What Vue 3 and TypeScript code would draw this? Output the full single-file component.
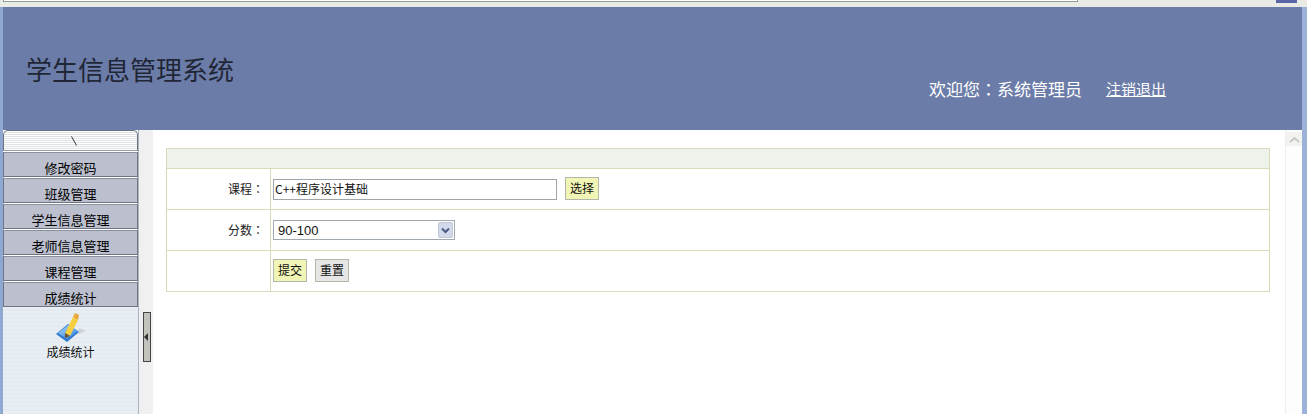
<script setup lang="ts">
import { ref } from 'vue'

const menus = ['修改密码', '班级管理', '学生信息管理', '老师信息管理', '课程管理', '成绩统计']

const course = ref('C++程序设计基础')
const score = ref('90-100')
</script>

<template>
  <div class="page">
    <div class="topbar">
      <div class="address"></div>
      <div class="go"></div>
    </div>
    <div class="frame">
      <header class="banner">
        <h1 class="title">学生信息管理系统</h1>
        <div class="welcome">欢迎您<span class="colon">：</span>系统管理员</div>
        <a class="logout">注销退出</a>
      </header>
      <div class="content">
        <aside class="side">
          <div class="side-head">
            <svg class="head-mark" width="10" height="12" viewBox="0 0 10 12"><path d="M2.500 1.500 L7.500 10.500" stroke="#333" stroke-width="1" fill="none" /></svg>
          </div>
          <div v-for="m in menus" :key="m" class="menu-item"><span>{{ m }}</span></div>
          <div class="side-panel">
            <svg class="pen" width="32" height="30" viewBox="0 0 32 30">
              <defs>
                <linearGradient id="pad" x1="0" y1="0" x2="1" y2="1">
                  <stop offset="0" stop-color="#a8d6f6" />
                  <stop offset="1" stop-color="#2f7fdc" />
                </linearGradient>
              </defs>
              <path d="M24 15 L31 18 L23 21 Z" fill="#c4c9ce" opacity="0.75" />
              <path d="M1 21 L13 11 L24 19 L12 29 Z" fill="#2f78d2" />
              <path d="M3 20 L13 12 L23 18 L12 26 Z" fill="url(#pad)" />
              <path d="M10 20 L18 4 L23 7 L15 23 Z" fill="#f6cf3f" />
              <path d="M18 4 L20 0 L24 2 L23 7 Z" fill="#e9a63a" />
              <path d="M10 20 L15 23 L10 25 Z" fill="#6b5230" />
            </svg>
            <div class="panel-label">成绩统计</div>
          </div>
        </aside>
        <div class="splitter">
          <div class="grip"><i></i></div>
        </div>
        <main class="main">
          <div class="form">
            <div class="form-head"></div>
            <div class="row">
              <label class="cell-label">课程<span class="colon">：</span></label>
              <div class="cell-field">
                <input v-model="course" class="text-input" type="text" />
                <button class="btn yellow">选择</button>
              </div>
            </div>
            <div class="row">
              <label class="cell-label">分数<span class="colon">：</span></label>
              <div class="cell-field">
                <div class="select">
                  <span class="select-value">{{ score }}</span>
                  <span class="select-arrow">
                    <svg width="9" height="7" viewBox="0 0 9 7"><path d="M1 1.500 L4.500 5 L8 1.500" stroke="#4a5c86" stroke-width="2" fill="none" /></svg>
                  </span>
                </div>
              </div>
            </div>
            <div class="row">
              <div class="cell-label"></div>
              <div class="cell-field">
                <button class="btn yellow">提交</button>
                <button class="btn gray">重置</button>
              </div>
            </div>
          </div>
          <div class="scrollbar">
            <div class="scroll-up">
              <svg width="11" height="7" viewBox="0 0 11 7"><path d="M1 6 L5.500 2 L10 6" stroke="#c6cac4" stroke-width="2" fill="none" /></svg>
            </div>
          </div>
        </main>
      </div>
    </div>
  </div>
</template>

<style scoped>
.page {
  width: 1307px;
  height: 414px;
  overflow: hidden;
  display: flex;
  flex-direction: column;
  background: #fff;
  font-family: "Noto Sans CJK SC", "Liberation Sans", sans-serif;
  color: #111;
}

.colon {
  font-family: "Noto Sans CJK TC", sans-serif;
}

.topbar {
  height: 7px;
  flex: none;
  display: flex;
  background: #e9e9e6;
  padding-left: 3px;
}

.address {
  width: 1073px;
  height: 1px;
  background: #fff;
  border: 1px solid #8f9c9a;
  border-top: none;
}

.go {
  width: 21px;
  height: 3px;
  margin-left: 198px;
  background: #5a64a8;
}

.frame {
  flex: 1;
  min-height: 0;
  display: flex;
  flex-direction: column;
  border-left: 3px solid #8fa8d2;
  border-right: 5px solid #9db2d8;
}

.banner {
  height: 123px;
  flex: none;
  display: flex;
  align-items: flex-start;
  background: #6b7ca8;
}

.title {
  margin: 43px 0 0 23px;
  font-size: 26px;
  line-height: 38px;
  font-weight: 400;
  color: #1f2636;
}

.welcome {
  margin: 69px 0 0 auto;
  font-size: 17px;
  line-height: 25px;
  color: #fff;
}

.logout {
  margin: 71px 136px 0 24px;
  font-size: 15px;
  line-height: 22px;
  color: #fff;
  text-decoration: underline;
}

.content {
  flex: 1;
  min-height: 0;
  display: flex;
}

.side {
  width: 135px;
  flex: none;
  display: flex;
  flex-direction: column;
  border-right: 1px solid #a9b4c2;
}

.side-head {
  height: 21px;
  box-sizing: border-box;
  flex: none;
  margin-bottom: 1px;
  display: flex;
  align-items: center;
  justify-content: center;
  border: 1px solid #6d7480;
  border-bottom-color: #9aa0a8;
  border-radius: 5px 5px 0 0;
  background: repeating-linear-gradient(#fff 0 1px, #dfe2e5 1px 2px);
}

.head-mark {
  margin-left: 6px;
}

.menu-item {
  height: 26px;
  box-sizing: border-box;
  flex: none;
  overflow: hidden;
  display: flex;
  justify-content: center;
  align-items: flex-end;
  background: #bcc0ce;
  border: 1px solid #6f7484;
  border-top-color: #8b90a0;
  border-bottom-color: #fff;
  box-shadow: inset 0 -1px 0 #6f7484;
  font-size: 13px;
  line-height: 18px;
  color: #000;
}

.side-panel {
  flex: 1;
  margin-top: -1px;
  display: flex;
  flex-direction: column;
  align-items: center;
  padding-top: 6px;
  background: repeating-linear-gradient(#e8eef3 0 2px, #e3eaf0 2px 4px);
}

.pen {
  display: block;
}

.panel-label {
  font-size: 12px;
  line-height: 17px;
  color: #111;
}

.splitter {
  width: 14px;
  flex: none;
  display: flex;
  align-items: flex-start;
  padding-top: 182px;
  background: #f0f0f0;
}

.grip {
  width: 6px;
  height: 48px;
  margin-left: 4px;
  display: flex;
  align-items: center;
  background: #c2c3bc;
  border: 1px solid #444;
}

.grip i {
  display: block;
  width: 0;
  height: 0;
  border-top: 4px solid transparent;
  border-bottom: 4px solid transparent;
  border-right: 4px solid #333;
}

.main {
  flex: 1;
  min-width: 0;
  position: relative;
  padding: 18px 32px 0 13px;
  background: #fff;
}

.form {
  border: 1px solid #d8dcb8;
  border-bottom: none;
}

.form-head {
  height: 20px;
  box-sizing: border-box;
  background: #edf2ea;
  border-bottom: 1px solid #d8dcb8;
}

.row {
  height: 40px;
  display: flex;
  border-bottom: 1px solid #d8dcb8;
}

.cell-label {
  width: 104px;
  flex: none;
  box-sizing: border-box;
  padding-right: 6px;
  border-right: 1px solid #d8dcb8;
  text-align: right;
  font-size: 12px;
  line-height: 40px;
  color: #222;
}

.cell-field {
  flex: 1;
  display: flex;
  align-items: center;
  gap: 8px;
  padding-left: 2px;
}

.text-input {
  width: 284px;
  height: 21px;
  box-sizing: border-box;
  padding: 0 1px 1px;
  border: 1px solid #a0a5a8;
  outline: none;
  background: #fff;
  font-family: inherit;
  font-size: 12px;
  color: #111;
}

.btn {
  width: 34px;
  height: 23px;
  margin-bottom: 1px;
  padding: 0 0 2px;
  border: 1px solid #b4b6a8;
  font-family: inherit;
  font-size: 12px;
  line-height: 18px;
  color: #111;
}

.btn.yellow {
  background: #f0f4b4;
}

.btn.gray {
  background: #e6e6e6;
}

.select {
  width: 182px;
  height: 20px;
  box-sizing: border-box;
  display: flex;
  align-items: center;
  justify-content: space-between;
  border: 1px solid #a0a8b0;
  background: #fff;
}

.select-value {
  padding: 1px 0 0 4px;
  font-family: "Liberation Sans", sans-serif;
  font-size: 13px;
  color: #111;
}

.select-arrow {
  width: 15px;
  height: 16px;
  box-sizing: border-box;
  margin-right: 1px;
  display: flex;
  align-items: center;
  justify-content: center;
  background: #d2d9ea;
  border: 1px solid #c0c8d8;
  border-radius: 2px;
}

.scrollbar {
  position: absolute;
  top: 0;
  right: 0;
  bottom: 0;
  width: 16px;
  padding-top: 2px;
  border-left: 1px solid #eee;
  background: #fdfdfd;
}

.scroll-up {
  height: 14px;
  display: flex;
  align-items: center;
  justify-content: center;
  background: #f2f2ee;
}
</style>
